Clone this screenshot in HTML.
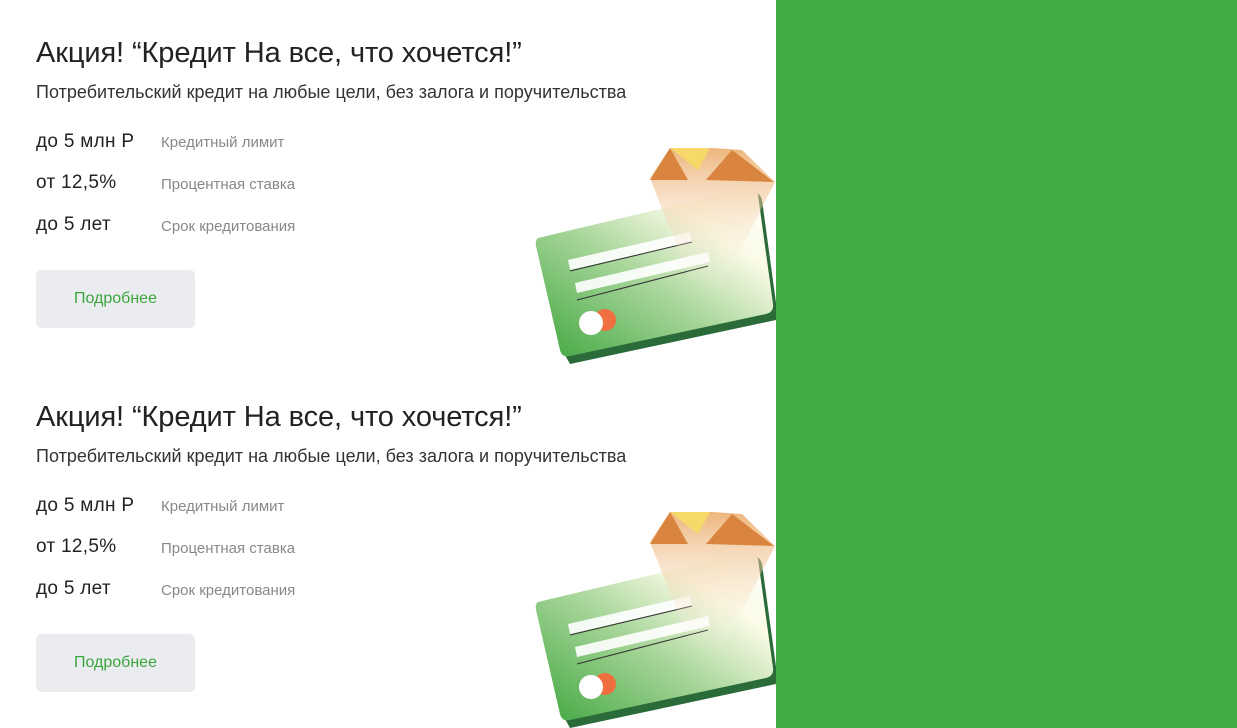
<!DOCTYPE html>
<html><head><meta charset="utf-8"><style>
body{margin:0;width:1237px;height:728px;overflow:hidden;background:#fff;font-family:"Liberation Sans",sans-serif;position:relative}
.g{position:absolute;left:776px;top:0;width:461px;height:728px;background:#43ab45}
.b{position:absolute;left:0;width:776px;height:364px;overflow:hidden}
h1{position:absolute;left:36px;top:37px;margin:0;font-weight:normal;font-size:29px;color:#222;letter-spacing:-0.1px;white-space:nowrap}
.s{position:absolute;left:36px;top:82px;font-size:18px;color:#333;white-space:nowrap;letter-spacing:0.02px}
.r{position:absolute;left:36px;font-size:19px;color:#222;letter-spacing:.3px}
.l{position:absolute;left:161px;font-size:15px;color:#888}
.btn{position:absolute;left:36px;top:270px;width:159px;height:58px;background:#ebecf0;border-radius:5px;color:#3aa63c;font-size:16px;text-align:center;line-height:58px}
svg{position:absolute;left:520px;top:130px}
</style></head><body>
<div class="g"></div>
<div class="b" style="top:0">
<h1>Акция! “Кредит На все, что хочется!”</h1>
<div class="s">Потребительский кредит на любые цели, без залога и поручительства</div>
<div class="r" style="top:131px">до 5 млн Р</div><div class="l" style="top:134px">Кредитный лимит</div>
<div class="r" style="top:172px">от 12,5%</div><div class="l" style="top:176px">Процентная ставка</div>
<div class="r" style="top:214px">до 5 лет</div><div class="l" style="top:218px">Срок кредитования</div>
<div class="btn">Подробнее</div>
<svg width="260" height="240" viewBox="0 0 260 240"><defs>
<linearGradient id="c" x1="0" y1="1" x2="1" y2="0"><stop offset="0" stop-color="#3fa63f"/><stop offset=".45" stop-color="#a8d69a"/><stop offset=".75" stop-color="#fbfbe8"/><stop offset="1" stop-color="#fff"/></linearGradient>
<linearGradient id="d" x1="0" y1="0" x2="0" y2="1"><stop offset="0" stop-color="#e9a35a"/><stop offset="1" stop-color="#fff" stop-opacity="0"/></linearGradient></defs>
<path d="M22 110 L232 62 Q240 62 242 70 L257 180 L256 190 L50 234 L45 225 Z" fill="#2b6b3a"/>
<path d="M18 108 L228 58 Q236 57 238 65 L253 174 Q254 182 246 184 L50 226 Q42 228 40 220 L16 116 Q15 110 18 108Z" fill="url(#c)"/>
<path d="M48 130 L170 102 L172 112 L50 140Z M55 153 L188 122 L190 132 L57 163Z" fill="#fff" opacity=".9"/>
<path d="M50 141 L172 112 M57 170 L188 136" stroke="#333" stroke-width="1"/>
<circle cx="85" cy="190" r="11" fill="#ef6f40"/><circle cx="71" cy="193" r="12" fill="#fff"/>
<path d="M130 48 L150 18 L192 18 L222 20 L255 52 L200 160 L170 150 Z" fill="url(#d)" opacity=".8"/>
<path d="M130 50 L150 18 L168 50Z" fill="#d9853f"/><path d="M150 18 L190 18 L178 40Z" fill="#f7d96a"/><path d="M186 50 L212 20 L254 52Z" fill="#d9853f"/>
</svg>
</div>
<div class="b" style="top:364px">
<h1>Акция! “Кредит На все, что хочется!”</h1>
<div class="s">Потребительский кредит на любые цели, без залога и поручительства</div>
<div class="r" style="top:131px">до 5 млн Р</div><div class="l" style="top:134px">Кредитный лимит</div>
<div class="r" style="top:172px">от 12,5%</div><div class="l" style="top:176px">Процентная ставка</div>
<div class="r" style="top:214px">до 5 лет</div><div class="l" style="top:218px">Срок кредитования</div>
<div class="btn">Подробнее</div>
<svg width="260" height="240" viewBox="0 0 260 240">
<path d="M22 110 L232 62 Q240 62 242 70 L257 180 L256 190 L50 234 L45 225 Z" fill="#2b6b3a"/>
<path d="M18 108 L228 58 Q236 57 238 65 L253 174 Q254 182 246 184 L50 226 Q42 228 40 220 L16 116 Q15 110 18 108Z" fill="url(#c)"/>
<path d="M48 130 L170 102 L172 112 L50 140Z M55 153 L188 122 L190 132 L57 163Z" fill="#fff" opacity=".9"/>
<path d="M50 141 L172 112 M57 170 L188 136" stroke="#333" stroke-width="1"/>
<circle cx="85" cy="190" r="11" fill="#ef6f40"/><circle cx="71" cy="193" r="12" fill="#fff"/>
<path d="M130 48 L150 18 L192 18 L222 20 L255 52 L200 160 L170 150 Z" fill="url(#d)" opacity=".8"/>
<path d="M130 50 L150 18 L168 50Z" fill="#d9853f"/><path d="M150 18 L190 18 L178 40Z" fill="#f7d96a"/><path d="M186 50 L212 20 L254 52Z" fill="#d9853f"/>
</svg>
</div>
</body></html>
